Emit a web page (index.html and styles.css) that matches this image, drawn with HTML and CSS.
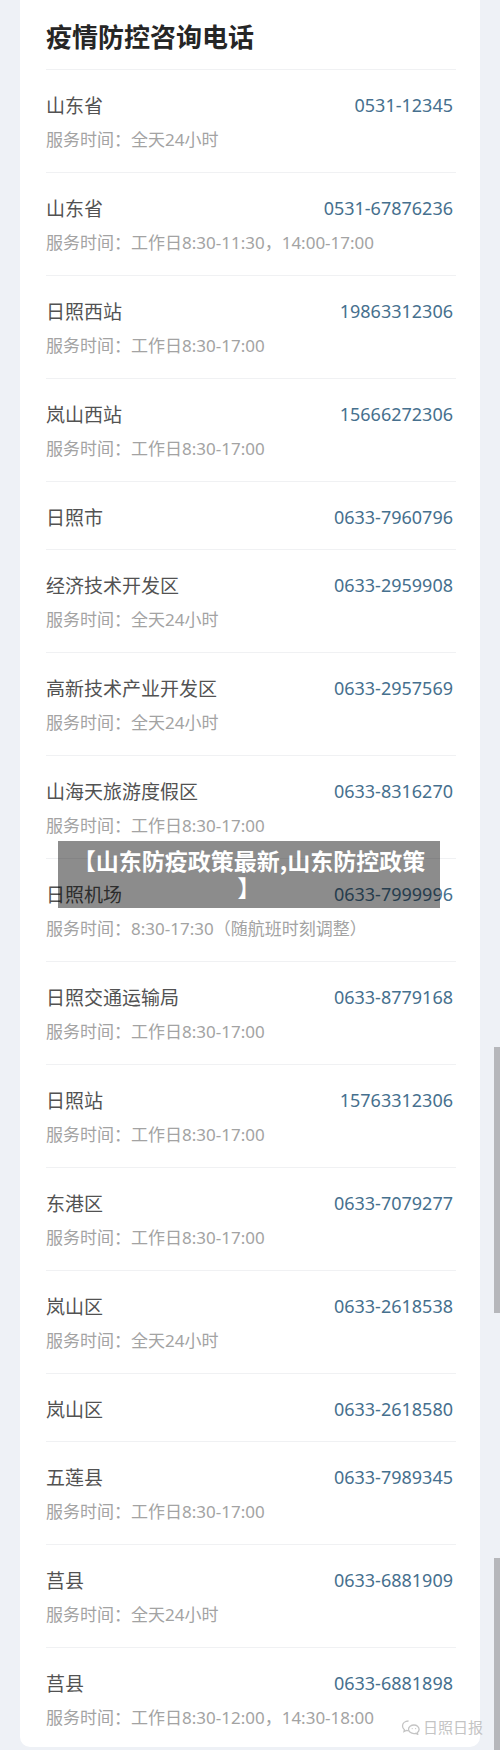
FILE: index.html
```html
<!DOCTYPE html>
<html lang="zh-CN">
<head>
    <meta charset="UTF-8">
    <meta name="viewport" content="width=device-width, initial-scale=1.0">
    <title>疫情防控咨询电话</title>
    <link rel="stylesheet" href="styles.css">
</head>
<body>

    <div class="card">
        <h2 class="card-title">疫情防控咨询电话</h2>

        <ul class="phone-list">
            <li class="phone-row">
                <div class="row-top"><span class="name">山东省</span><span class="phone">0531-12345</span></div>
                <p class="hours">服务时间：全天24小时</p>
            </li>
            <li class="phone-row">
                <div class="row-top"><span class="name">山东省</span><span class="phone">0531-67876236</span></div>
                <p class="hours">服务时间：工作日8:30-11:30，14:00-17:00</p>
            </li>
            <li class="phone-row">
                <div class="row-top"><span class="name">日照西站</span><span class="phone">19863312306</span></div>
                <p class="hours">服务时间：工作日8:30-17:00</p>
            </li>
            <li class="phone-row">
                <div class="row-top"><span class="name">岚山西站</span><span class="phone">15666272306</span></div>
                <p class="hours">服务时间：工作日8:30-17:00</p>
            </li>
            <li class="phone-row">
                <div class="row-top"><span class="name">日照市</span><span class="phone">0633-7960796</span></div>
            </li>
            <li class="phone-row">
                <div class="row-top"><span class="name">经济技术开发区</span><span class="phone">0633-2959908</span></div>
                <p class="hours">服务时间：全天24小时</p>
            </li>
            <li class="phone-row">
                <div class="row-top"><span class="name">高新技术产业开发区</span><span class="phone">0633-2957569</span></div>
                <p class="hours">服务时间：全天24小时</p>
            </li>
            <li class="phone-row">
                <div class="row-top"><span class="name">山海天旅游度假区</span><span class="phone">0633-8316270</span></div>
                <p class="hours">服务时间：工作日8:30-17:00</p>
            </li>
            <li class="phone-row">
                <div class="row-top"><span class="name">日照机场</span><span class="phone">0633-7999996</span></div>
                <p class="hours">服务时间：8:30-17:30（随航班时刻调整）</p>
            </li>
            <li class="phone-row">
                <div class="row-top"><span class="name">日照交通运输局</span><span class="phone">0633-8779168</span></div>
                <p class="hours">服务时间：工作日8:30-17:00</p>
            </li>
            <li class="phone-row">
                <div class="row-top"><span class="name">日照站</span><span class="phone">15763312306</span></div>
                <p class="hours">服务时间：工作日8:30-17:00</p>
            </li>
            <li class="phone-row">
                <div class="row-top"><span class="name">东港区</span><span class="phone">0633-7079277</span></div>
                <p class="hours">服务时间：工作日8:30-17:00</p>
            </li>
            <li class="phone-row">
                <div class="row-top"><span class="name">岚山区</span><span class="phone">0633-2618538</span></div>
                <p class="hours">服务时间：全天24小时</p>
            </li>
            <li class="phone-row">
                <div class="row-top"><span class="name">岚山区</span><span class="phone">0633-2618580</span></div>
            </li>
            <li class="phone-row">
                <div class="row-top"><span class="name">五莲县</span><span class="phone">0633-7989345</span></div>
                <p class="hours">服务时间：工作日8:30-17:00</p>
            </li>
            <li class="phone-row">
                <div class="row-top"><span class="name">莒县</span><span class="phone">0633-6881909</span></div>
                <p class="hours">服务时间：全天24小时</p>
            </li>
            <li class="phone-row">
                <div class="row-top"><span class="name">莒县</span><span class="phone">0633-6881898</span></div>
                <p class="hours">服务时间：工作日8:30-12:00，14:30-18:00</p>
            </li>
        </ul>

        <!-- Watermark -->
        <div class="watermark">
            <svg width="20" height="16" viewBox="0 0 20 16" fill="none" stroke="#c4c4c4" stroke-width="1.3">
                <path d="M7.5 2C4 2 1.5 4.2 1.5 7c0 1.5.7 2.8 1.9 3.7L3 12.6l2.3-1.2c.7.2 1.4.3 2.2.3"/>
                <path d="M13 6c-3 0-5.5 1.9-5.5 4.3S10 14.6 13 14.6c.6 0 1.2-.1 1.8-.3l1.9 1-.4-1.6c1.1-.8 1.8-1.9 1.8-3.1C18.1 7.9 15.7 6 13 6z"/>
                <circle cx="11.2" cy="9.6" r=".6" fill="#c4c4c4" stroke="none"/>
                <circle cx="14.6" cy="9.6" r=".6" fill="#c4c4c4" stroke="none"/>
            </svg>
            <span>日照日报</span>
        </div>
    </div>

    <!-- Caption banner over the image -->
    <div class="caption">【山东防疫政策最新,山东防控政策<br>】</div>

    <!-- Scrollbar marks of the screenshot -->
    <div class="scroll-mark mark-one"></div>
    <div class="scroll-mark mark-two"></div>

</body>
</html>
```

FILE: styles.css
```css
body {
    margin: 0;
    background-color: #eef1f6;
    font-family: "Noto Sans", "Noto Sans CJK SC", sans-serif;
    position: relative;
    height: 1750px;
    overflow: hidden;
}

/* Card */
.card {
    position: relative;
    margin-left: 20px;
    width: 460px;
    height: 1747px;
    box-sizing: border-box;
    padding: 0 24px 0 26px;
    background-color: #fff;
    border-radius: 0 0 10px 10px;
}

.card-title {
    margin: 0;
    padding: 19px 0 14px;
    font-size: 26px;
    line-height: 36px;
    font-weight: 600;
    color: #262626;
    border-bottom: 1px solid #f0f1f3;
}

/* Phone list */
.phone-list {
    list-style: none;
    margin: 0;
    padding: 0;
}

.phone-row {
    padding: 22px 0 19px;
    border-bottom: 1px solid #f0f1f3;
}

.phone-row:last-child {
    border-bottom: none;
}

.row-top {
    display: flex;
    justify-content: space-between;
    align-items: center;
    height: 26px;
}

.name {
    font-size: 19px;
    color: #525252;
}

.phone {
    font-size: 18px;
    color: #46708e;
    margin-right: 3px;
}

.hours {
    margin: 10px 0 0;
    font-size: 17px;
    line-height: 24px;
    color: #a3a3a3;
    padding-bottom: 1px;
}

/* Watermark */
.watermark {
    position: absolute;
    right: -3px;
    bottom: 10px;
    display: flex;
    align-items: center;
    gap: 2px;
    font-size: 15px;
    color: #c4c4c4;
}

/* Caption */
.caption {
    position: absolute;
    left: 58px;
    top: 841px;
    width: 382px;
    box-sizing: border-box;
    padding: 6px 6px 7px;
    background-color: rgba(0, 0, 0, 0.45);
    color: #fff;
    font-family: "Noto Sans CJK SC", sans-serif;
    font-size: 23px;
    font-weight: 700;
    line-height: 27px;
    text-align: center;
    white-space: nowrap;
}

/* Scroll marks */
.scroll-mark {
    position: absolute;
    right: 0;
    width: 6px;
    background-color: #b6b7bb;
}

.mark-one {
    top: 1047px;
    height: 266px;
}

.mark-two {
    top: 1558px;
    height: 192px;
}
```
